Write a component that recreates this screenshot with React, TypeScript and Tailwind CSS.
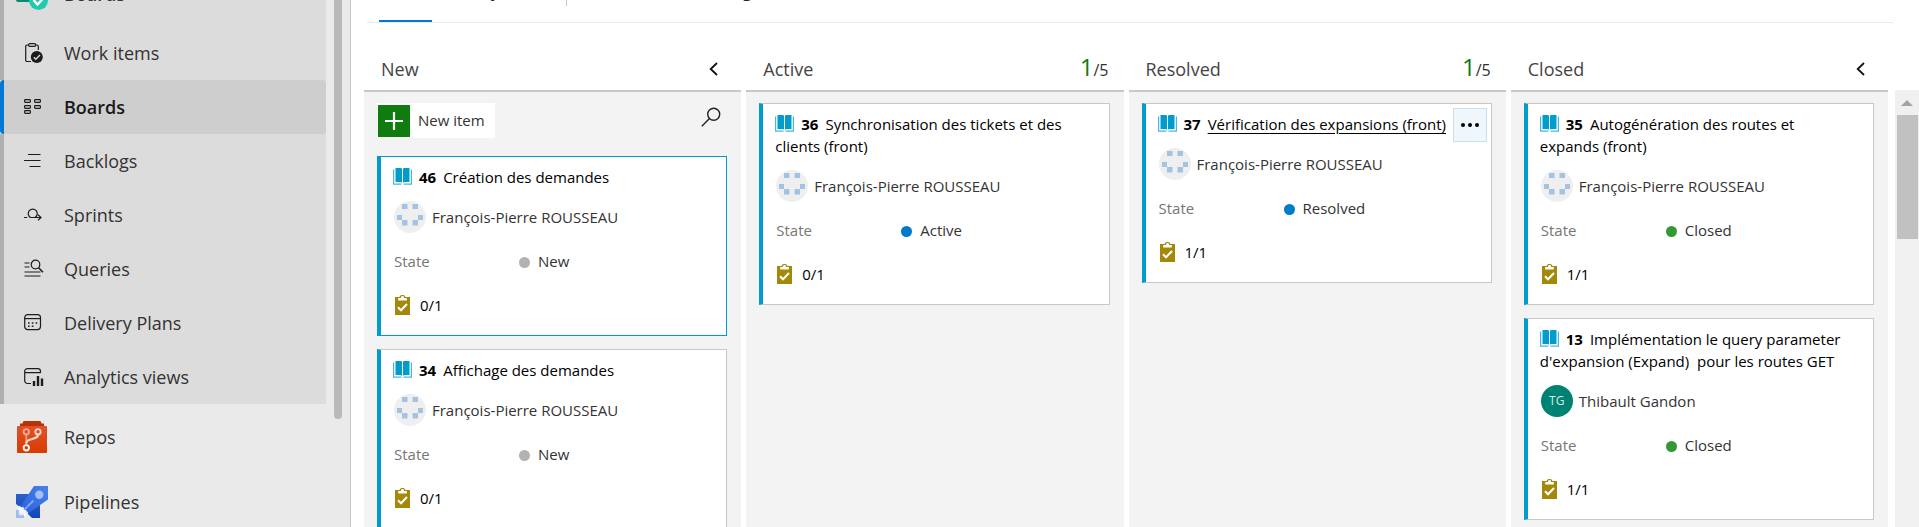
import type { ReactNode } from "react";

type Assignee = { name: string; initials?: string };
type WorkItem = {
  id: number;
  title: string;
  assignee: Assignee;
  state: "New" | "Active" | "Resolved" | "Closed";
  tasks: string;
  selected?: boolean;
  hovered?: boolean;
};
type Column = { title: string; count?: number; limit?: number; canAdd?: boolean; items: WorkItem[] };

const fp: Assignee = { name: "François-Pierre ROUSSEAU" };
const tg: Assignee = { name: "Thibault Gandon", initials: "TG" };

const columns: Column[] = [
  {
    title: "New",
    canAdd: true,
    items: [
      { id: 46, title: "Création des demandes", assignee: fp, state: "New", tasks: "0/1", selected: true },
      { id: 34, title: "Affichage des demandes", assignee: fp, state: "New", tasks: "0/1" },
    ],
  },
  {
    title: "Active",
    count: 1,
    limit: 5,
    items: [
      { id: 36, title: "Synchronisation des tickets et des clients (front)", assignee: fp, state: "Active", tasks: "0/1" },
    ],
  },
  {
    title: "Resolved",
    count: 1,
    limit: 5,
    items: [
      { id: 37, title: "Vérification des expansions (front)", assignee: fp, state: "Resolved", tasks: "1/1", hovered: true },
    ],
  },
  {
    title: "Closed",
    items: [
      { id: 35, title: "Autogénération des routes et expands (front)", assignee: fp, state: "Closed", tasks: "1/1" },
      {
        id: 13,
        title: "Implémentation le query parameter d'expansion (Expand)\u00a0 pour les routes GET",
        assignee: tg,
        state: "Closed",
        tasks: "1/1",
      },
    ],
  },
];

const stateColor = {
  New: "bg-[#b2b2b2]",
  Active: "bg-[#007acc]",
  Resolved: "bg-[#007acc]",
  Closed: "bg-[#339933]",
};

/* ---------- sidebar icons ---------- */

function LineIcon({ children }: { children: ReactNode }) {
  return (
    <svg viewBox="0 0 20 20" className="size-5 shrink-0" fill="none" stroke="#1c1c1c" strokeWidth="1.2" aria-hidden="true">
      {children}
    </svg>
  );
}

const WorkItemsIcon = () => (
  <LineIcon>
    <path d="M7 18.500H3a1.300 1.300 0 0 1-1.300-1.300V3.300A1.300 1.300 0 0 1 3 2h1.500M11.500 2H13a1.300 1.300 0 0 1 1.300 1.300V7" />
    <rect x="4.500" y="0.700" width="7.200" height="2.700" rx="1.350" />
    <circle cx="12.800" cy="14" r="6" fill="#1c1c1c" stroke="none" />
    <path d="M9.800 14.200l2 2 4.200-4.300" stroke="#dcdcdc" strokeWidth="1.400" />
  </LineIcon>
);
const BoardsIcon = () => (
  <LineIcon>
    <rect x="0.600" y="2.600" width="5.800" height="2.800" rx="0.800" />
    <rect x="0.600" y="8.600" width="5.800" height="2.800" rx="0.800" />
    <rect x="0.600" y="13.600" width="5.800" height="2.800" rx="0.800" />
    <rect x="10.600" y="2.600" width="5.800" height="2.800" rx="0.800" />
    <rect x="10.600" y="8.600" width="5.800" height="2.800" rx="0.800" />
  </LineIcon>
);
const BacklogsIcon = () => (
  <LineIcon>
    <path d="M4 3.500h12.500M0 9.500h16.500M5.500 15.500h11" />
  </LineIcon>
);
const SprintsIcon = () => (
  <LineIcon>
    <path d="M0 12.500h3.200M6.500 12.500h10.500M14 9.800l3 2.700-3 2.700M6.500 12.500a4.500 4.500 0 1 1 4.500 0" />
  </LineIcon>
);
const QueriesIcon = () => (
  <LineIcon>
    <path d="M0.500 4h5M0.500 8h5M0.500 13h16M0.500 17h16" />
    <circle cx="11.500" cy="5.500" r="4.300" />
    <path d="M14.600 8.700l4.400 4.600" strokeWidth="1.500" />
  </LineIcon>
);
const PlansIcon = () => (
  <LineIcon>
    <rect x="0.700" y="1.600" width="15.800" height="15" rx="3" />
    <path d="M0.700 5.600h15.800" />
    <path d="M4 10h1.600M7.800 10h1.600M11.600 10h1.600M4 13.200h1.600M7.800 13.200h1.600" strokeWidth="1.600" />
  </LineIcon>
);
const AnalyticsIcon = () => (
  <LineIcon>
    <path d="M7 16.500H3.500a2.800 2.800 0 0 1-2.800-2.800V4.400a2.800 2.800 0 0 1 2.800-2.800h10.200a2.800 2.800 0 0 1 2.800 2.800V6M0.700 5.600h15.800" />
    <path d="M10 14v5M14 9v10M18 11.500v7.500" strokeWidth="2.400" strokeLinecap="butt" />
  </LineIcon>
);

const ProductBoardsIcon = () => (
  <svg viewBox="0 0 32 32" className="size-8 shrink-0" aria-hidden="true">
    <rect width="26" height="24" rx="2" fill="#0e8a6f" />
    <circle cx="22.500" cy="22.500" r="9.500" fill="#1fcbae" />
    <path d="M17.500 22l4 4.500 6.500-7" fill="none" stroke="#fff" strokeWidth="2.400" />
  </svg>
);
const ReposIcon = () => (
  <svg viewBox="0 0 32 32" className="size-8 shrink-0" aria-hidden="true">
    <defs>
      <linearGradient id="repos" x1="0" y1="0" x2="0" y2="1">
        <stop offset="0" stopColor="#e0522a" />
        <stop offset="1" stopColor="#d83b01" />
      </linearGradient>
    </defs>
    <path d="M7.500 0h17l1 2.500H28V8H4V2.500h2.500z" fill="#b83304" />
    <rect x="1" y="5" width="30" height="27" rx="1" fill="url(#repos)" />
    <g fill="none" strokeWidth="1.800">
      <path d="M10.300 13.500v10" stroke="#f19a78" />
      <path d="M10.300 22.500c0-2.500 1.500-3 5-4.200 4.500-1.500 6.700-2 6.700-4.800" stroke="#fcd9cc" strokeWidth="2.200" />
      <circle cx="10.300" cy="10.800" r="2.700" stroke="#f5a98b" />
      <circle cx="22" cy="10.800" r="2.700" stroke="#fcd9cc" />
      <circle cx="10.300" cy="26.800" r="2.700" stroke="#fff" />
    </g>
  </svg>
);
const PipelinesIcon = () => (
  <svg viewBox="0 0 32 32" className="size-8 shrink-0" aria-hidden="true">
    <defs>
      <linearGradient id="rocket" x1="1" y1="0" x2="0" y2="1">
        <stop offset="0" stopColor="#4a82e8" />
        <stop offset="1" stopColor="#2a60dd" />
      </linearGradient>
      <linearGradient id="fins" x1="0" y1="0" x2="0" y2="1">
        <stop offset="0" stopColor="#2c5fc9" />
        <stop offset="1" stopColor="#1047b8" />
      </linearGradient>
    </defs>
    <path d="M0 8h13v11H7l-2 3-5-4zM13 19h11v13H16l-4-4z" fill="url(#fins)" />
    <path d="M18 0h14v13.500L12.500 27 5 19.500z" fill="url(#rocket)" />
    <circle cx="23.300" cy="8.700" r="4.200" fill="#a4bff5" />
    <path d="M17.500 14.500l-9.500 9.500" stroke="#7ea5f0" strokeWidth="2" />
    <path d="M3.500 19.500l2.500 2.500 1.500-1v3l3 .5-2 2 3 3.500H8v-3H3.500V23.500H2z" fill="#f5f8ff" />
    <path d="M0 24h2.800v5.200H8V32H0z" fill="#9dbcf7" />
  </svg>
);

/* ---------- sidebar ---------- */

const boardsLinks = [
  { label: "Work items", icon: <WorkItemsIcon /> },
  { label: "Boards", icon: <BoardsIcon />, current: true },
  { label: "Backlogs", icon: <BacklogsIcon /> },
  { label: "Sprints", icon: <SprintsIcon /> },
  { label: "Queries", icon: <QueriesIcon /> },
  { label: "Delivery Plans", icon: <PlansIcon /> },
  { label: "Analytics views", icon: <AnalyticsIcon /> },
];

function Sidebar() {
  return (
    <aside className="flex w-[351px] shrink-0 items-start overflow-hidden border-r border-[#c8c8c8] bg-[#eaeaea] text-lg text-[#333]">
      <nav className="-mt-[38px] w-[326px] shrink-0" aria-label="Project">
        <div className="bg-[#dcdcdc]">
          <a href="#boards-hub" className="flex h-16 items-center gap-4 border-l-4 border-[#b0b0b0] pl-3 font-semibold leading-6">
            <ProductBoardsIcon />
            Boards
          </a>
          {boardsLinks.map((link) => (
            <a
              key={link.label}
              href="#boards"
              aria-current={link.current ? "page" : undefined}
              className={
                link.current
                  ? "flex h-[54px] items-center gap-5 rounded-sm border-l-4 border-[#0078d4] bg-[#cecece] pl-5 font-semibold text-[#1a1a1a]"
                  : "flex h-[54px] items-center gap-5 border-l-4 border-[#b0b0b0] pl-5"
              }
            >
              {link.icon}
              {link.label}
            </a>
          ))}
        </div>
        <a href="#repos" className="mt-px flex h-16 items-center gap-4 pl-4">
          <ReposIcon />
          Repos
        </a>
        <a href="#pipelines" className="mt-px flex h-16 items-center gap-4 pl-4">
          <PipelinesIcon />
          Pipelines
        </a>
      </nav>
      <div className="ml-2 h-[419px] w-2 rounded-b-full bg-[#bababa]" />
    </aside>
  );
}

/* ---------- cards ---------- */

const BookIcon = () => (
  <svg viewBox="0 0 19 17" className="mr-[7px] inline-block h-[17px] w-[19px] align-[-2px]" aria-hidden="true">
    <path d="M2.500 0h5Q9 0 9 1v13.500q-1-.5-2-.5H2.500zM16.500 0h-5Q10 0 10 1v13.500q1-.5 2-.5h4.500z" fill="#009ccc" />
    <path d="M.6 1.500v14.700h7.900M18.400 1.500v14.700h-7.900" fill="none" stroke="#4ab6db" strokeWidth="1.200" />
  </svg>
);
const ClipboardIcon = () => (
  <svg viewBox="0 0 15 20" className="h-5 w-[15px] shrink-0" aria-hidden="true">
    <path d="M0 2h15v18H0z" fill="#a4880a" />
    <path d="M3.200 5.400V3h2.400a1.900 1.900 0 0 1 3.800 0h2.400v2.400z" fill="#fff" />
    <path d="M5 3a2.500 2.500 0 0 1 5 0" fill="none" stroke="#a4880a" strokeWidth="1.200" />
    <path d="M3 12.300l3 3 6-6.300" fill="none" stroke="#fff" strokeWidth="2" />
  </svg>
);

function Avatar({ person }: { person: Assignee }) {
  if (person.initials) {
    return (
      <span className="flex size-8 shrink-0 items-center justify-center rounded-full bg-[#008272] text-xs text-[#d5efeb]">
        {person.initials}
      </span>
    );
  }
  return (
    <svg viewBox="0 0 32 32" className="size-8 shrink-0" aria-hidden="true">
      <circle cx="16" cy="16" r="16" fill="#efefef" />
      <path d="M8 3h5.500v5H8zM18.500 3H24v5h-5.500zM3 14h5v5H3zM24 14h5v5h-5zM8 19h5.500v5.500H8zM18.500 19H24v5.500h-5.500z" fill="#a3c3e3" />
    </svg>
  );
}

function Card({ item }: { item: WorkItem }) {
  return (
    <article
      className={
        item.selected
          ? "relative border border-l-4 border-[#009ccc] bg-white pt-[9px] pr-6 pb-[18px] pl-3"
          : "relative border border-l-4 border-[#c8c8c8] border-l-[#009ccc] bg-white pt-[9px] pr-6 pb-[18px] pl-3"
      }
    >
      <h3 className="leading-[22px] text-black">
        <BookIcon />
        <b className="mr-[7px] font-bold">{item.id}</b>
        <a href="#item" className={item.hovered ? "underline underline-offset-3" : ""}>
          {item.title}
        </a>
      </h3>
      {item.hovered && (
        <button
          type="button"
          aria-label="Item actions"
          className="absolute top-1 right-1 flex size-[34px] items-center justify-center border border-[#c7e0f4] bg-[#eff6fc]"
        >
          <svg viewBox="0 0 18 4" className="h-1 w-[18px]" aria-hidden="true">
            <circle cx="2" cy="2" r="2" />
            <circle cx="9" cy="2" r="2" />
            <circle cx="16" cy="2" r="2" />
          </svg>
        </button>
      )}
      <div className="mt-[13px] flex items-center gap-1.5 pl-px">
        <Avatar person={item.assignee} />
        <span>{item.assignee.name}</span>
      </div>
      <dl className="mt-4 flex h-6 items-center pl-px leading-6">
        <dt className="w-[125px] text-[#767676]">State</dt>
        <dd className="flex items-center gap-2">
          <span className={`mt-0.5 size-[11px] rounded-full ${stateColor[item.state]}`} />
          {item.state}
        </dd>
      </dl>
      <div className="mt-5 flex h-6 items-center gap-2.5 pl-0.5 text-black">
        <ClipboardIcon />
        {item.tasks}
      </div>
    </article>
  );
}

function BoardColumn({ column }: { column: Column }) {
  return (
    <section className="flex min-w-0 flex-1 flex-col">
      <header className="flex h-[53px] shrink-0 items-center justify-between border-b-2 border-[#c8c8c8] pt-2 pr-[15px] pl-[17px]">
        <h2 className="text-lg text-[#444]">{column.title}</h2>
        {column.limit ? (
          <span className="text-base text-[#333]">
            <span className="text-2xl leading-none text-[#107c10]">{column.count}</span>/{column.limit}
          </span>
        ) : (
          <button type="button" aria-label="Collapse column" className="mr-2">
            <svg viewBox="0 0 9 14" className="h-3.5 w-[9px]" fill="none" stroke="#111" strokeWidth="1.800" aria-hidden="true">
              <path d="M8 1L1.700 7 8 13" />
            </svg>
          </button>
        )}
      </header>
      <div className="flex grow flex-col gap-[13px] bg-[#f3f3f3] pt-[11px] pr-3.5 pl-[13px]">
        {column.canAdd && (
          <div className="mb-[5px] flex items-start justify-between">
            <button type="button" className="flex h-[35px] items-center gap-2 bg-white pr-2.5 pl-px">
              <svg viewBox="0 0 32 32" className="size-8" aria-hidden="true">
                <path d="M0 0h32v32H0z" fill="#107c10" />
                <path d="M16 7v18M7 16h18" stroke="#fff" strokeWidth="2.200" />
              </svg>
              New item
            </button>
            <button type="button" aria-label="Filter items" className="mt-1 mr-1.5">
              <svg viewBox="0 0 20 20" className="size-5" fill="none" stroke="#222" strokeWidth="1.400" aria-hidden="true">
                <circle cx="12.700" cy="7.300" r="6" />
                <path d="M8.500 11.500L.8 19.200" />
              </svg>
            </button>
          </div>
        )}
        {column.items.map((item) => (
          <Card key={item.id} item={item} />
        ))}
      </div>
    </section>
  );
}

export default function App() {
  return (
    <div className="flex h-screen overflow-hidden bg-white font-['Open_Sans','Noto_Sans',sans-serif] text-[15px] text-[#333]">
      <Sidebar />
      <main className="flex min-w-0 flex-1 flex-col">
        <nav
          aria-label="Views"
          className="-mt-[27px] mr-[26px] ml-4 flex h-[50px] items-stretch border-b border-[#eaeaea] pl-3 text-[17px] leading-9 text-[#222]"
        >
          <a href="#board" className="w-[53px] border-b-2 border-[#0078d4] font-semibold">
            Board
          </a>
          <a href="#analytics" className="ml-6 w-[90px]">
            Analytics
          </a>
          <span className="ml-5 h-[33px] w-px bg-[#c8c8c8]" />
          <a href="#backlog" className="ml-[60px]">
            View as Backlog
          </a>
        </nav>
        <div className="mt-4 flex min-h-0 flex-1 pl-[13px]">
          <div className="flex min-w-0 flex-1 gap-[5px]">
            {columns.map((column) => (
              <BoardColumn key={column.title} column={column} />
            ))}
          </div>
          <div className="mt-[51px] ml-[7px] flex w-6 flex-col items-center bg-[#f0f0f0] pt-2.5">
            <svg viewBox="0 0 12 6" className="h-1.5 w-3 shrink-0" aria-hidden="true">
              <path d="M6 0l6 6H0z" fill="#a3a3a3" />
            </svg>
            <div className="mt-[9px] h-[124px] w-[21px] shrink-0 bg-[#c1c1c1]" />
          </div>
        </div>
      </main>
    </div>
  );
}
